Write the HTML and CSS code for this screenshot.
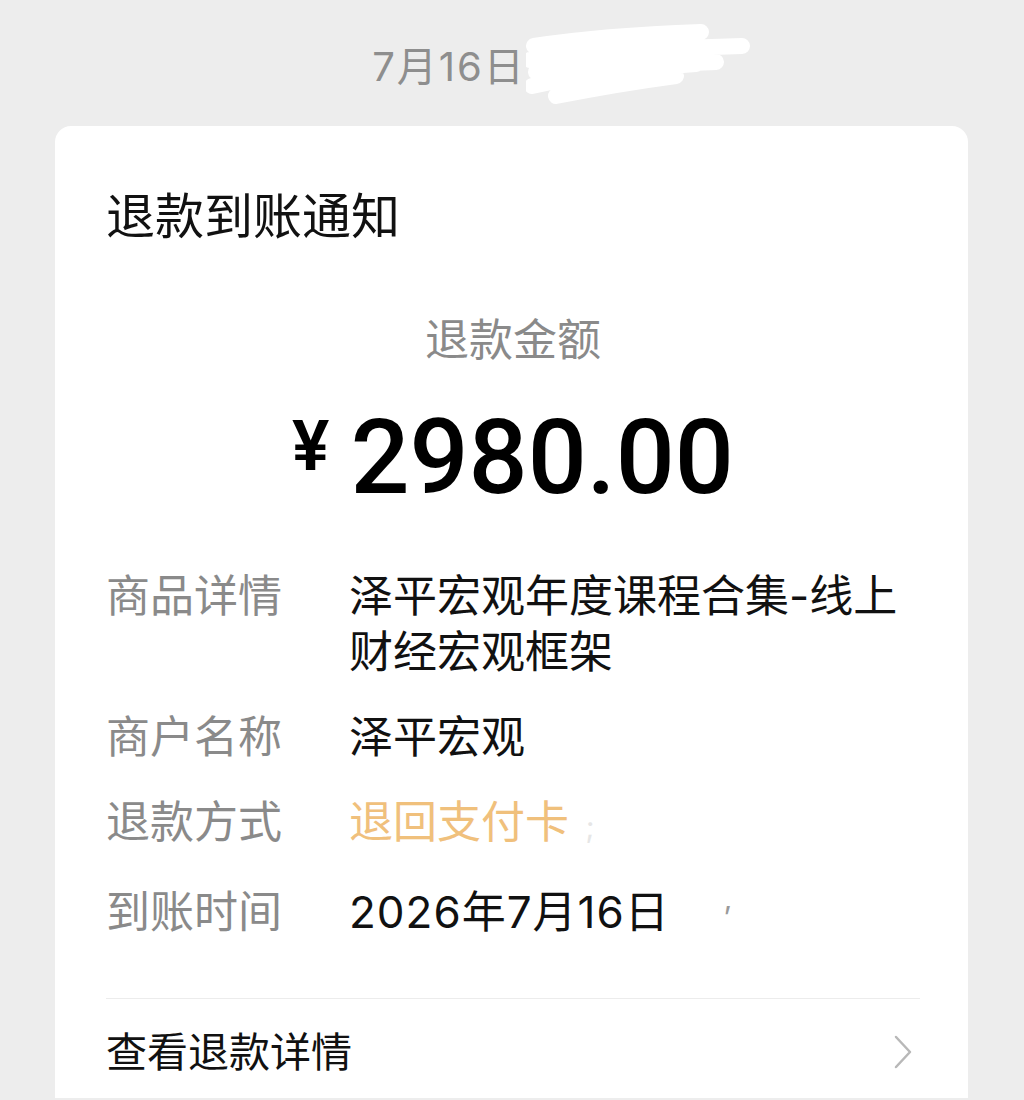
FILE: index.html
```html
<!DOCTYPE html>
<html lang="zh-CN">
<head>
    <meta charset="UTF-8">
    <meta name="viewport" content="width=device-width, initial-scale=1.0">
    <title>退款到账通知</title>
    <link rel="stylesheet" href="styles.css">
</head>
<body>
    <!-- Message time -->
    <div class="msg-time">
        <span>7月16日</span>
        <svg class="scribble" width="226" height="80" viewBox="0 0 226 80">
            <path d="M8 22 C60 14 120 10 175 8 M4 36 C70 28 140 24 216 22 M10 48 C80 42 150 40 190 38 M6 62 C50 52 110 44 170 40 M30 72 C80 62 120 56 150 52"
                  fill="none" stroke="#fff" stroke-width="16" stroke-linecap="round"/>
        </svg>
    </div>

    <div class="card">
        <h1 class="card-title">退款到账通知</h1>

        <div class="amount-label">退款金额</div>
        <div class="amount">
            <span class="currency">¥</span>
            <span class="value">2980.00</span>
        </div>

        <!-- Detail rows -->
        <div class="details">
            <div class="label">商品详情</div>
            <div class="text">泽平宏观年度课程合集-线上财经宏观框架</div>

            <div class="label">商户名称</div>
            <div class="text">泽平宏观</div>

            <div class="label">退款方式</div>
            <div class="text orange">退回支付卡 <span class="faint">;</span></div>

            <div class="label">到账时间</div>
            <div class="text date">2026年7月16日 <span class="faint mark">’</span></div>
        </div>

        <div class="link-row">
            <span>查看退款详情</span>
            <svg class="chevron" width="20" height="34" viewBox="0 0 20 34">
                <path d="M3 2 L17 17 L3 32" fill="none" stroke="#b8b8b8" stroke-width="2.5" stroke-linecap="round" stroke-linejoin="round"/>
            </svg>
        </div>
    </div>
</body>
</html>
```

FILE: styles.css
```css
* {
    box-sizing: border-box;
    margin: 0;
    padding: 0;
}

body {
    font-family: 'Inter', 'Noto Sans CJK SC', sans-serif;
    background-color: #ededed;
    height: 1100px;
    overflow: hidden;
}

.msg-time {
    height: 126px;
    display: flex;
    justify-content: center;
    align-items: center;
    padding-top: 2px;
    font-size: 40px;
    color: #8e8e8e;
}

.msg-time span {
    letter-spacing: 2px;
}

.scribble {
    margin-right: -100px;
}

.card {
    background-color: #fff;
    margin: 0 56px 0 55px;
    border-radius: 16px 16px 0 0;
    padding: 61px 48px 18px 51px;
}

.card-title {
    font-size: 49px;
    font-weight: normal;
    line-height: 60px;
    color: #111;
}

.amount-label {
    margin-top: 63px;
    text-align: center;
    font-size: 44px;
    line-height: 60px;
    color: #8a8a8a;
}

.amount {
    margin-top: 36px;
    display: flex;
    justify-content: center;
    align-items: flex-start;
    font-family: 'Roboto', sans-serif;
    font-weight: 500;
    color: #000;
}

.currency {
    font-size: 70px;
    font-weight: 600;
    line-height: 1;
    margin-top: 5px;
    margin-right: 21px;
}

.value {
    font-size: 104px;
    line-height: 1;
}

.details {
    margin-top: 58px;
    display: grid;
    grid-template-columns: 243px 1fr;
    row-gap: 29px;
    font-size: 44px;
    line-height: 56px;
}

.label {
    color: #8a8a8a;
}

.text {
    color: #111;
}

.date {
    letter-spacing: 1px;
}

.orange {
    color: #f0c07c;
}

.faint {
    color: #e6e6e6;
    font-size: 30px;
    margin-left: 4px;
}

.mark {
    color: #9a9a9a;
    margin-left: 40px;
}

.link-row {
    margin-top: 53px;
    border-top: 1px solid #ececec;
    padding-top: 25px;
    display: flex;
    justify-content: space-between;
    align-items: center;
    font-size: 41px;
    line-height: 56px;
    color: #111;
}

.chevron {
    margin-right: 7px;
}
```
